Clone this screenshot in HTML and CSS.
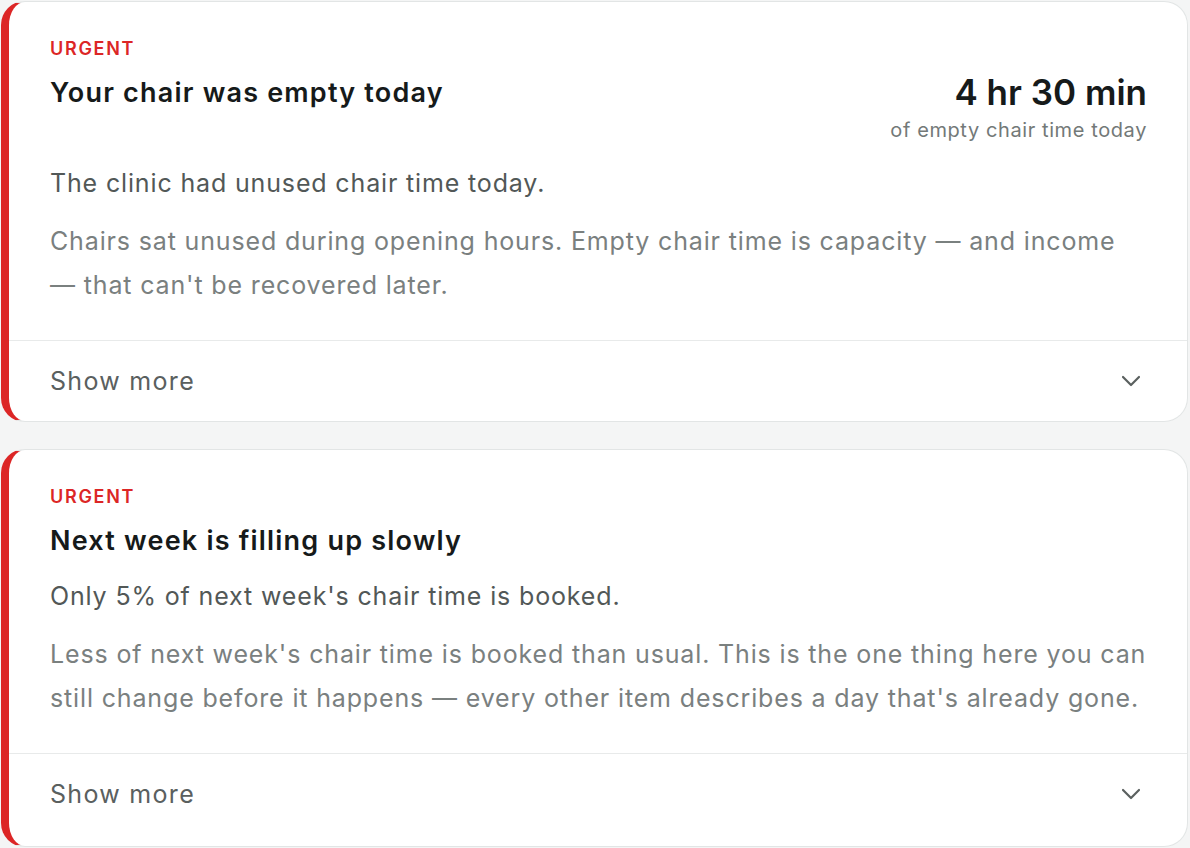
FILE: index.html
```html
<!DOCTYPE html>
<html lang="en">
<head>
<meta charset="utf-8">
<title>Alerts</title>
<link rel="stylesheet" href="styles.css">
</head>
<body>
<main class="list">
  <article class="card">
    <div class="card-body">
      <div class="tag">URGENT</div>
      <div class="head">
        <h2 class="title">Your chair was empty today</h2>
        <div class="metric">
          <div class="metric-value">4 hr 30 min</div>
          <div class="metric-label">of empty chair time today</div>
        </div>
      </div>
      <p class="lead">The clinic had unused chair time today.</p>
      <p class="detail">Chairs sat unused during opening hours. Empty chair time is capacity — and income — that can't be recovered later.</p>
    </div>
    <button class="more" type="button">
      <span>Show more</span>
      <svg class="chev" width="20" height="12" viewBox="0 0 20 12" aria-hidden="true"><path d="M2 2 L10 10 L18 2" fill="none" stroke="currentColor" stroke-width="2.2" stroke-linecap="round" stroke-linejoin="round"/></svg>
    </button>
  </article>

  <article class="card">
    <div class="card-body">
      <div class="tag">URGENT</div>
      <div class="head">
        <h2 class="title">Next week is filling up slowly</h2>
      </div>
      <p class="lead">Only 5% of next week's chair time is booked.</p>
      <p class="detail">Less of next week's chair time is booked than usual. This is the one thing here you can still change before it happens — every other item describes a day that's already gone.</p>
    </div>
    <button class="more more-last" type="button">
      <span>Show more</span>
      <svg class="chev" width="20" height="12" viewBox="0 0 20 12" aria-hidden="true"><path d="M2 2 L10 10 L18 2" fill="none" stroke="currentColor" stroke-width="2.2" stroke-linecap="round" stroke-linejoin="round"/></svg>
    </button>
  </article>
</main>
</body>
</html>
```

FILE: styles.css
```css
html, body {
  margin: 0;
  padding: 0;
  background: #f4f5f5;
}

body {
  font-family: Inter, "Noto Sans", "Liberation Sans", sans-serif;
  padding: 1px 2px 0 1px;
}

.list {
  display: flex;
  flex-direction: column;
  gap: 27px;
}

.card {
  background: #ffffff;
  border: 1px solid #e2e5e5;
  border-left: 8px solid #dc2626;
  border-radius: 24px;
  overflow: hidden;
}

.card-body {
  padding: 35px 40px 33px 41px;
}

.tag {
  color: #dc2626;
  font-size: 18px;
  font-weight: 600;
  letter-spacing: 1.7px;
  line-height: 24px;
}

.head {
  display: flex;
  justify-content: space-between;
  align-items: flex-start;
  margin-top: 10px;
}

.title {
  margin: 0;
  font-size: 27px;
  font-weight: 600;
  line-height: 44px;
  color: #161a1a;
  letter-spacing: 1.2px;
}

.metric {
  text-align: right;
  padding-bottom: 7px;
}

.metric-value {
  font-size: 35px;
  font-weight: 600;
  line-height: 42px;
  color: #161a1a;
  letter-spacing: 0;
}

.metric-label {
  margin-top: 4px;
  font-size: 20px;
  line-height: 26px;
  color: #737978;
  letter-spacing: 0.6px;
}

.lead {
  margin: 15px 0 0;
  font-size: 25px;
  line-height: 36px;
  color: #525857;
  letter-spacing: 0.85px;
}

.detail {
  margin: 18px -2px 0 0;
  font-size: 25px;
  line-height: 44px;
  color: #7a807f;
  letter-spacing: 0.85px;
}

.more {
  display: flex;
  align-items: center;
  justify-content: space-between;
  box-sizing: border-box;
  width: 100%;
  height: 81px;
  margin: 0;
  padding: 0 46px 0 41px;
  border: 0;
  border-top: 1px solid #e8eaea;
  background: transparent;
  font-family: inherit;
  font-size: 25px;
  letter-spacing: 1.3px;
  color: #5a605f;
  cursor: pointer;
  text-align: left;
}

.more-last {
  height: 93px;
  padding-bottom: 12px;
}

.more span {
  line-height: 36px;
}

.chev {
  color: #5a605f;
  display: block;
}
```
